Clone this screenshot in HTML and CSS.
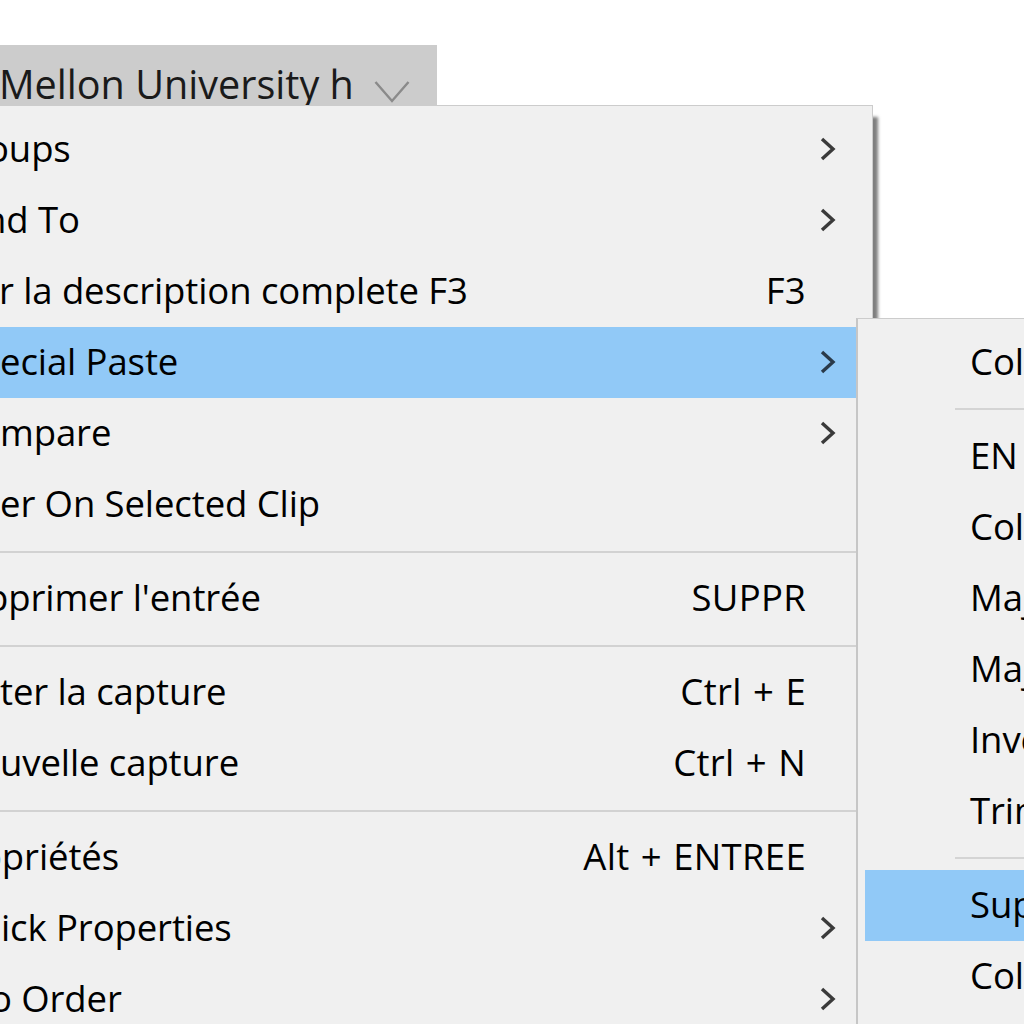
FILE: index.html
```html
<!DOCTYPE html>
<html>
<head>
<meta charset="utf-8">
<link rel="stylesheet" href="styles.css">
</head>
<body>
<div class="tab">
  <span class="tab-text">Mellon University h</span>
  <svg class="tab-chev" width="36" height="24" viewBox="0 0 36 24"><polyline points="1.5,2 18,21 34.5,2" fill="none" stroke="#8a8a8a" stroke-width="2.4"/></svg>
</div>

<div class="menu main">
  <div class="item"><span class="label m13">oups</span><span class="arrow"><svg width="18" height="26" viewBox="0 0 18 26"><polyline points="3,3 14,13 3,23" fill="none" stroke="#3a3a3a" stroke-width="3.4"/></svg></span></div>
  <div class="item"><span class="label m16">nd To</span><span class="arrow"><svg width="18" height="26" viewBox="0 0 18 26"><polyline points="3,3 14,13 3,23" fill="none" stroke="#3a3a3a" stroke-width="3.4"/></svg></span></div>
  <div class="item"><span class="label m1">r la description complete F3</span><span class="key">F3</span><span class="arrow"></span></div>
  <div class="item hl"><span class="label">ecial Paste</span><span class="arrow"><svg width="18" height="26" viewBox="0 0 18 26"><polyline points="3,3 14,13 3,23" fill="none" stroke="#2a3a4a" stroke-width="3.4"/></svg></span></div>
  <div class="item"><span class="label">mpare</span><span class="arrow"><svg width="18" height="26" viewBox="0 0 18 26"><polyline points="3,3 14,13 3,23" fill="none" stroke="#3a3a3a" stroke-width="3.4"/></svg></span></div>
  <div class="item"><span class="label">er On Selected Clip</span><span class="arrow"></span></div>
  <div class="sep"></div>
  <div class="item"><span class="label m14">pprimer l'entrée</span><span class="key">SUPPR</span><span class="arrow"></span></div>
  <div class="sep"></div>
  <div class="item"><span class="label">ter la capture</span><span class="key">Ctrl + E</span><span class="arrow"></span></div>
  <div class="item"><span class="label">uvelle capture</span><span class="key">Ctrl + N</span><span class="arrow"></span></div>
  <div class="sep"></div>
  <div class="item"><span class="label m20">opriétés</span><span class="key">Alt + ENTREE</span><span class="arrow"></span></div>
  <div class="item"><span class="label p1">ick Properties</span><span class="arrow"><svg width="18" height="26" viewBox="0 0 18 26"><polyline points="3,3 14,13 3,23" fill="none" stroke="#3a3a3a" stroke-width="3.4"/></svg></span></div>
  <div class="item"><span class="label m10">o Order</span><span class="arrow"><svg width="18" height="26" viewBox="0 0 18 26"><polyline points="3,3 14,13 3,23" fill="none" stroke="#3a3a3a" stroke-width="3.4"/></svg></span></div>
</div>

<div class="menu submenu">
  <div class="sitem"><span class="label">Coller</span></div>
  <div class="ssep"></div>
  <div class="sitem"><span class="label">EN majuscules</span></div>
  <div class="sitem"><span class="label">Coller sans format</span></div>
  <div class="sitem"><span class="label">Majuscules</span></div>
  <div class="sitem"><span class="label">Majuscule initiale</span></div>
  <div class="sitem"><span class="label">Inverser la casse</span></div>
  <div class="sitem"><span class="label">Trim</span></div>
  <div class="ssep"></div>
  <div class="sitem hl"><span class="label">Supprimer</span></div>
  <div class="sitem"><span class="label">Coller</span></div>
</div>
</body>
</html>
```

FILE: styles.css
```css
html, body {
  margin: 0;
  padding: 0;
  width: 1024px;
  height: 1024px;
  overflow: hidden;
  background: #ffffff;
  font-family: "Open Sans", "Noto Sans", "Liberation Sans", sans-serif;
  color: #000;
}

.tab {
  margin-top: 45px;
  width: 437px;
  height: 61px;
  background: #cccccc;
  display: flex;
  align-items: flex-start;
}

.tab-text {
  display: block;
  width: 357px;
  overflow: hidden;
  white-space: nowrap;
  font-size: 39.6px;
  padding-top: 19px;
  line-height: 41px;
  margin-left: -1px;
  color: #1a1a1a;
}

.tab-chev {
  margin-left: 18px;
  margin-top: 35px;
  flex: none;
}

.menu {
  position: absolute;
  box-sizing: border-box;
  background: #f0f0f0;
  border: 1px solid #cccccc;
  padding-top: 8px;
}

.main {
  left: -11px;
  top: 105px;
  width: 884px;
  height: 1000px;
  box-shadow: 5px 12px 3px rgba(0, 0, 0, 0.5);
}

.item {
  display: flex;
  align-items: flex-start;
  height: 71px;
  margin: 0 2px;
  padding-left: 8px;
  font-size: 36.5px;
  line-height: 69px;
  white-space: nowrap;
}

.hl {
  background: #91c9f7;
}

.label {
  flex: 1;
  letter-spacing: -0.1px;
}

.m1 { margin-left: -1px; }
.m10 { margin-left: -10px; }
.m13 { margin-left: -13px; }
.m14 { margin-left: -14px; }
.m16 { margin-left: -16px; }
.m20 { margin-left: -20px; }
.p1 { margin-left: 1px; }

.key {
  flex: none;
  letter-spacing: 0.3px;
  word-spacing: 1.5px;
}

.arrow {
  flex: none;
  width: 64px;
  display: flex;
  align-items: center;
  height: 71px;
  padding-left: 13px;
  box-sizing: border-box;
}

.arrow svg {
  display: block;
  margin-top: -2px;
}

.sep {
  height: 2px;
  margin: 11px 2px 10px 0;
  background: #d2d2d2;
}

.submenu {
  left: 856px;
  top: 318px;
  width: 420px;
  height: 760px;
  border-left: 2px solid #c6c6c6;
  box-shadow: 5px 12px 3px rgba(0, 0, 0, 0.5);
}

.sitem {
  height: 71px;
  margin-left: 7px;
  padding-left: 105px;
  font-size: 36.5px;
  line-height: 69px;
  white-space: nowrap;
  display: flex;
}

.ssep {
  height: 2px;
  margin: 10px 0 11px 97px;
  background: #d4d4d4;
}
```
